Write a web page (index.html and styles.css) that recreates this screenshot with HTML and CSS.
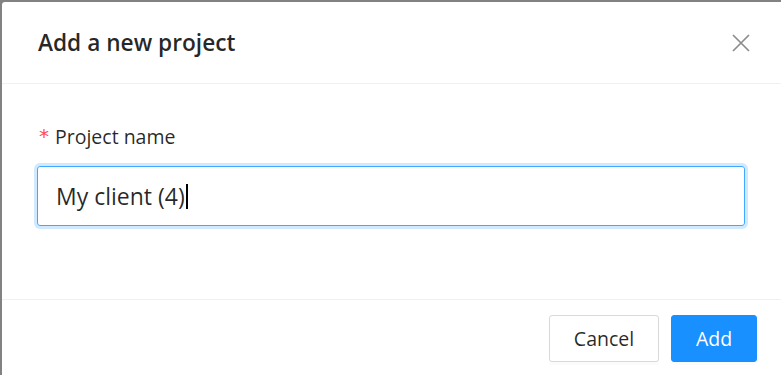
FILE: index.html
```html
<!DOCTYPE html>
<html lang="en">
<head>
<meta charset="utf-8">
<title>Add a new project</title>
<link rel="stylesheet" href="styles.css">
</head>
<body>
<div class="modal">
  <div class="modal-header">
    <div class="modal-title">Add a new project</div>
    <button class="modal-close" aria-label="Close">
      <svg width="18" height="18" viewBox="0 0 18 18"><path d="M1 1 L17 17 M17 1 L1 17" stroke="#8c8c8c" stroke-width="1.7" fill="none"/></svg>
    </button>
  </div>
  <div class="modal-body">
    <div class="form-label"><span class="req">*</span>Project name</div>
    <div class="input"><span class="input-text">My client (4)</span><span class="caret"></span></div>
  </div>
  <div class="modal-footer">
    <button class="btn btn-default">Cancel</button>
    <button class="btn btn-primary">Add</button>
  </div>
</div>
</body>
</html>
```
FILE: styles.css
```css
html, body {
  margin: 0;
  padding: 0;
}
body {
  background: #828282;
  width: 781px;
  height: 375px;
  overflow: hidden;
  font-family: "Open Sans", "Noto Sans", sans-serif;
  color: rgba(0,0,0,0.85);
}
.modal {
  margin: 2px 0 0 2px;
  width: 779px;
  height: 373px;
  overflow: hidden;
  background: #fff;
  border-radius: 3px 0 0 0;
}
.modal-header {
  display: flex;
  align-items: center;
  justify-content: space-between;
  height: 81px;
  padding: 0 0 0 36px;
  border-bottom: 1px solid #f0f0f0;
  box-sizing: content-box;
}
.modal-title {
  font-size: 22.7px;
  font-weight: 600;
  line-height: 33px;
  color: rgba(0,0,0,0.85);
}
.modal-close {
  width: 84px;
  height: 81px;
  border: 0;
  background: none;
  padding: 0;
  display: flex;
  align-items: center;
  justify-content: center;
  margin-right: -2px;
}
.modal-body {
  padding: 36px 36px 0 35px;
  height: 179px;
  border-bottom: 1px solid #f0f0f0;
  box-sizing: content-box;
}
.form-label {
  font-size: 19.5px;
  line-height: 33px;
  padding-bottom: 13px;
  display: flex;
  align-items: center;
}
.req {
  color: #ff4d4f;
  font-family: "DejaVu Sans", sans-serif;
  font-size: 20px;
  margin-right: 6px;
  margin-left: 2px;
}
.input {
  height: 58px;
  border: 1px solid #40a9ff;
  border-radius: 3px;
  box-shadow: 0 0 0 3px rgba(24,144,255,0.2);
  display: flex;
  align-items: center;
  padding: 0 18px;
  font-size: 23px;
  color: rgba(0,0,0,0.85);
}
.caret {
  display: inline-block;
  width: 2px;
  height: 25px;
  background: #000;
  margin-left: 1px;
}
.modal-footer {
  display: flex;
  justify-content: flex-end;
  gap: 12px;
  padding: 15px 24px 0 0;
}
.btn {
  height: 47px;
  padding: 0;
  font-family: "Open Sans", "Noto Sans", sans-serif;
  font-size: 19.5px;
  border: 1px solid #d9d9d9;
  border-radius: 3px;
  background: #fff;
  color: rgba(0,0,0,0.85);
  box-shadow: 0 3px 0 rgba(0,0,0,0.015);
}
.btn-default {
  width: 110px;
}
.btn-primary {
  background: #1890ff;
  border-color: #1890ff;
  color: #fff;
  width: 86px;
}
```
